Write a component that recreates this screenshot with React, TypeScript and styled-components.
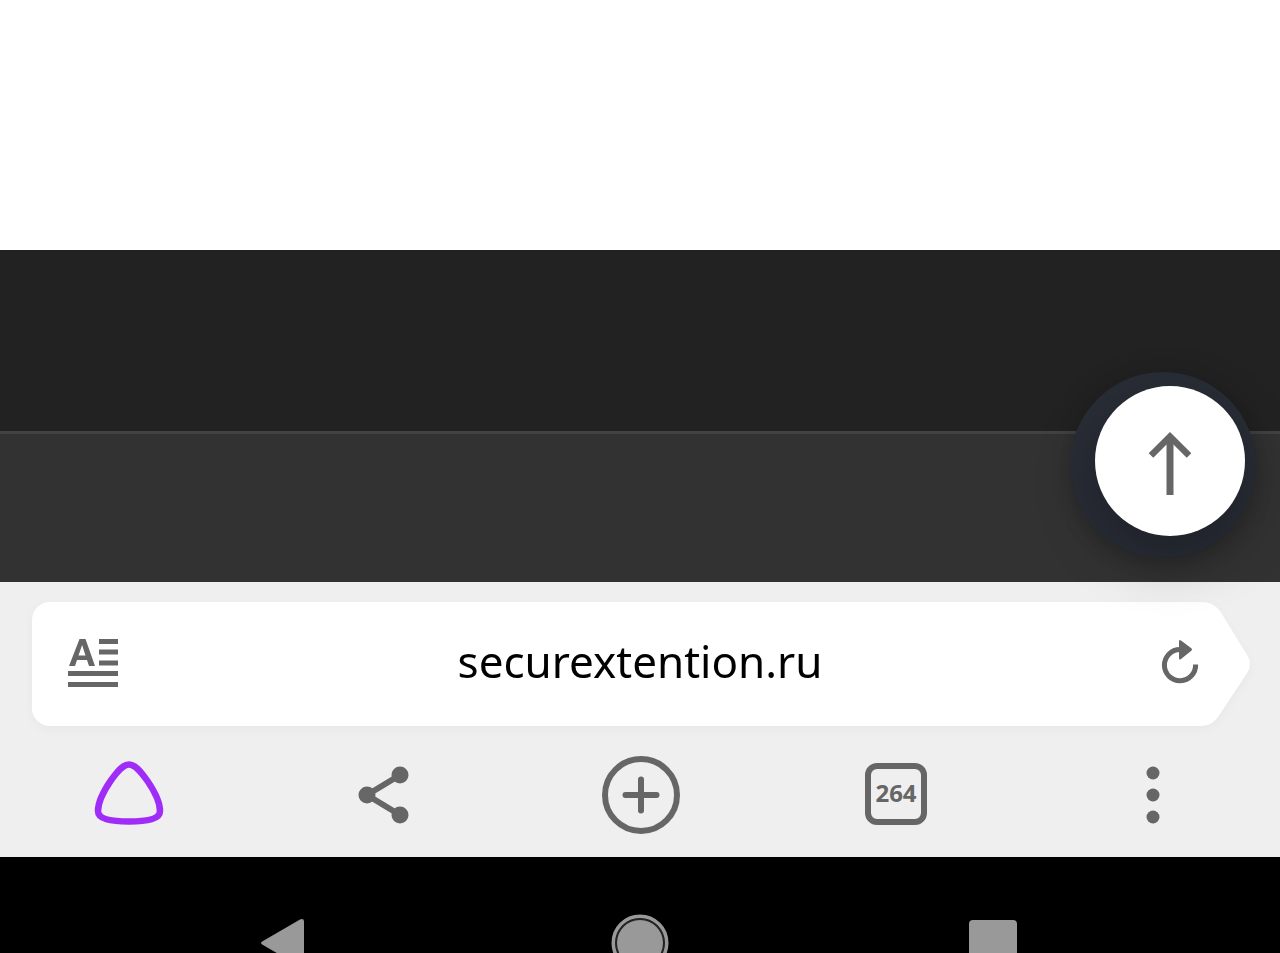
import React, { useState } from "react";
import styled, { createGlobalStyle } from "styled-components";

const GlobalStyle = createGlobalStyle`
  *, *::before, *::after { box-sizing: border-box; }
  body {
    margin: 0;
    background: #ffffff;
    font-family: "Noto Sans", "Open Sans", sans-serif;
  }
`;

const Screen = styled.div`
  display: flex;
  flex-direction: column;
  min-height: 100vh;
  overflow: hidden;
`;

const Viewport = styled.main`
  position: relative;
  z-index: 1;
  flex: 1;
  display: flex;
  flex-direction: column;
`;

const PageBody = styled.section`
  flex: 1;
  background: #ffffff;
`;

const PageFooter = styled.footer`
  background: #222222;
  padding-top: 181px;
`;

const FooterBar = styled.div`
  height: 151px;
  border-top: 3px solid #424242;
  background: #323232;
`;

const IconButton = styled.button`
  display: flex;
  align-items: center;
  justify-content: center;
  padding: 0;
  border: 0;
  background: none;
  color: #666666;
  cursor: pointer;

  svg { display: block; }
`;

const RoundButton = styled(IconButton)<{ $size: number; $right: number; $bottom: number; $dark?: boolean }>`
  position: absolute;
  right: ${(p) => p.$right}px;
  bottom: ${(p) => p.$bottom}px;
  width: ${(p) => p.$size}px;
  height: ${(p) => p.$size}px;
  border-radius: 50%;
  background: ${(p) => (p.$dark ? "#292d36" : "#ffffff")};
  box-shadow: ${(p) =>
    p.$dark ? "0 4px 20px rgba(0, 0, 0, 0.2)" : "0 20px 60px rgba(0, 0, 0, 0.3)"};
`;

const BrowserPanel = styled.header`
  background: #efefef;
`;

const AddressForm = styled.form`
  display: flex;
  margin: 0;
  padding: 20px 30px 0 32px;
  filter: drop-shadow(0 3px 4px rgba(0, 0, 0, 0.03));
`;

const AddressField = styled.div`
  flex: 1;
  min-width: 0;
  display: flex;
  height: 124px;
  border-radius: 18px 0 0 18px;
  background: #ffffff;
`;

const ReaderButton = styled(IconButton)`
  width: 122px;
  flex: none;
  padding-bottom: 3px;
`;

const AddressInput = styled.input`
  flex: 1;
  min-width: 0;
  padding: 0 0 6px;
  border: 0;
  outline: 0;
  background: none;
  color: #000000;
  font-family: "Noto Sans", "Open Sans", sans-serif;
  font-size: 44px;
  text-align: center;
`;

const ReloadButton = styled(IconButton)`
  flex: none;
`;

const Toolbar = styled.nav`
  display: grid;
  grid-template-columns: repeat(5, 1fr);
  height: 131px;
  padding-top: 6px;
`;

const TabCount = styled.span`
  display: flex;
  align-items: center;
  justify-content: center;
  width: 62px;
  height: 62px;
  margin-bottom: 2px;
  padding-bottom: 2px;
  border: 6px solid #666666;
  border-radius: 12px;
  font: 700 24px/24px "Noto Sans", "Open Sans", sans-serif;
`;

const SystemBar = styled.nav`
  display: grid;
  grid-template-columns: repeat(3, 1fr);
  height: 96px;
  padding: 56px 8.4% 0;
  overflow: hidden;
  background: #000000;
`;

const SystemButton = styled(IconButton)`
  height: 60px;
  color: #999999;
`;

export default function App() {
  const [address, setAddress] = useState("securextention.ru");

  return (
    <Screen>
      <GlobalStyle />
      <Viewport>
        <PageBody />
        <PageFooter>
          <FooterBar />
        </PageFooter>
        <RoundButton type="button" aria-label="Наверх" $size={186} $right={24} $bottom={24} $dark />
        <RoundButton type="button" aria-label="К началу страницы" $size={150} $right={35} $bottom={46}>
          <svg width="50" height="70" viewBox="0 0 50 70" fill="none" stroke="currentColor">
            <path d="M25 10V69" strokeWidth="7" />
            <path d="M6 29.500L25 10.500L44 29.500" strokeWidth="6.500" />
          </svg>
        </RoundButton>
      </Viewport>

      <BrowserPanel>
        <AddressForm onSubmit={(e) => e.preventDefault()}>
          <AddressField>
            <ReaderButton type="button" aria-label="Режим чтения">
              <svg width="52" height="52" viewBox="0 0 52 52" fill="currentColor">
                <path
                  fillRule="evenodd"
                  d="M2 29L12.5 2H18.500L28 29H22L20 23H10L8 29ZM11.500 18.500H18.500L15.100 8Z"
                />
                <path d="M32 2H51V7H32ZM32 12.5H51V17.5H32ZM32 23.5H51V28.5H32ZM1 34H51V39H1ZM1 45H51V50H1Z" />
              </svg>
            </ReaderButton>
            <AddressInput
              type="text"
              aria-label="Адрес"
              spellCheck={false}
              value={address}
              onChange={(e) => setAddress(e.target.value)}
            />
          </AddressField>
          <ReloadButton type="submit" aria-label="Обновить">
            <svg width="124" height="124" viewBox="0 0 124 124">
              <path
                fill="#ffffff"
                d="M0 0H76Q87 0 94 9L121 53Q127 62 121 71L94 112Q87 124 76 124H0Z"
              />
              <path d="M54 47.500A15.600 15.600 0 1 0 69.600 62.500" fill="none" stroke="currentColor" strokeWidth="5" />
              <path d="M53 39.500Q53 37 55 38.500L65 46Q67 47.500 65 49L55 57Q53 58.500 53 56Z" fill="currentColor" />
            </svg>
          </ReloadButton>
        </AddressForm>

        <Toolbar aria-label="Браузер">
          <IconButton type="button" aria-label="Алиса">
            <svg width="76" height="76" viewBox="0 0 76 76" fill="none" stroke="#a02cf8" strokeWidth="6.500">
              <path d="M39 7.500C33 7.500 28 13.500 20.500 24C13 35 8 45 8 54C8 62 20 64.500 39 64.500C58 64.500 70 62 70 54C70 45 65 35 57.500 24C50 13.500 45 7.500 39 7.500Z" />
            </svg>
          </IconButton>
          <IconButton type="button" aria-label="Поделиться">
            <svg width="60" height="60" viewBox="0 0 60 60" fill="currentColor">
              <path d="M46 10L13 30L46 50" fill="none" stroke="currentColor" strokeWidth="6" />
              <circle cx="46" cy="10" r="8.500" />
              <circle cx="13" cy="30" r="8.500" />
              <circle cx="46" cy="50" r="8.500" />
            </svg>
          </IconButton>
          <IconButton type="button" aria-label="Новая вкладка">
            <svg width="80" height="80" viewBox="0 0 80 80" fill="none" stroke="currentColor">
              <circle cx="41" cy="40" r="36" strokeWidth="6" />
              <path d="M41 24.500V55.500M25.500 40H56.500" strokeWidth="6" strokeLinecap="round" />
            </svg>
          </IconButton>
          <IconButton type="button" aria-label="Вкладки: 264">
            <TabCount>264</TabCount>
          </IconButton>
          <IconButton type="button" aria-label="Меню">
            <svg width="20" height="60" viewBox="0 0 20 60" fill="currentColor">
              <circle cx="11" cy="8" r="6.500" />
              <circle cx="11" cy="30" r="6.500" />
              <circle cx="11" cy="52" r="6.500" />
            </svg>
          </IconButton>
        </Toolbar>
      </BrowserPanel>

      <SystemBar aria-label="Система">
        <SystemButton type="button" aria-label="Назад">
          <svg width="60" height="60" viewBox="0 0 60 60" fill="currentColor">
            <path d="M8 28L45 6.500Q49 4.500 49 9V51Q49 55.500 45 53.500L8 32Q4 30 8 28Z" />
          </svg>
        </SystemButton>
        <SystemButton type="button" aria-label="Домой">
          <svg width="60" height="60" viewBox="0 0 60 60" fill="currentColor">
            <circle cx="30" cy="30" r="24" />
            <circle cx="30" cy="30" r="26.500" fill="none" stroke="currentColor" strokeWidth="4" />
            <circle cx="30" cy="30" r="24" fill="none" stroke="#222222" strokeWidth="2" />
          </svg>
        </SystemButton>
        <SystemButton type="button" aria-label="Недавние приложения">
          <svg width="60" height="60" viewBox="0 0 60 60" fill="currentColor">
            <rect x="4" y="7" width="48" height="48" rx="4" />
          </svg>
        </SystemButton>
      </SystemBar>
    </Screen>
  );
}
